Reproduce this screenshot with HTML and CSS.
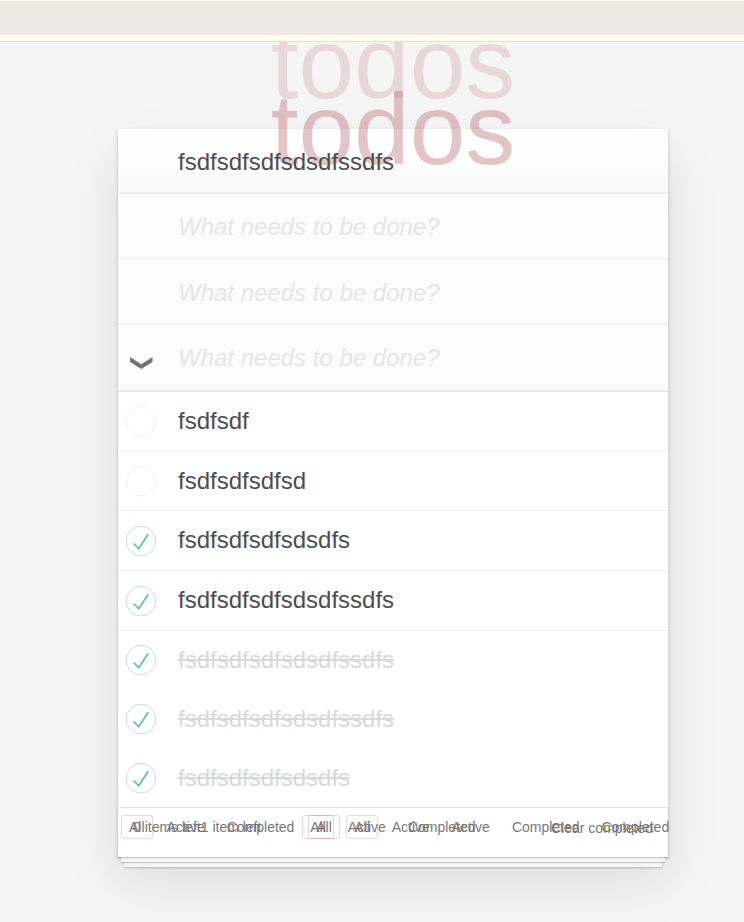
FILE: index.html
```
<!DOCTYPE html>
<html lang="en">
<head>
<meta charset="utf-8">
<title>todos</title>
<link rel="stylesheet" href="styles.css">
</head>
<body>
<svg class="defs" width="0" height="0">
  <symbol id="open" viewBox="-10 -18 100 135"><circle cx="50" cy="50" r="50" fill="none" stroke="#ededed" stroke-width="3"/></symbol>
  <symbol id="done" viewBox="-10 -18 100 135"><circle cx="50" cy="50" r="50" fill="none" stroke="#bddad5" stroke-width="3"/><path fill="#5dc2af" d="M72 25L42 71 27 56l-4 4 20 20 34-52z"/></symbol>
</svg>
<div class="banner"><div class="banner-fill"></div></div>
<main class="stage">
  <h1 class="title title-back">todos</h1>
  <section class="app">
    <div class="entry entry-first"><span class="entry-text">fsdfsdfsdfsdsdfssdfs</span></div>
    <h1 class="title title-front">todos</h1>
    <div class="sheet">
      <div class="entry placeholder"><span>What needs to be done?</span></div>
      <div class="entry placeholder"><span>What needs to be done?</span></div>
      <div class="entry placeholder">
        <svg class="chevron" viewBox="0 0 24 14"><path fill="#737373" d="M1.1 1 12.3 8.2 23.5 1V5.9L12.3 13.1 1.1 5.9z"/></svg>
        <span>What needs to be done?</span>
      </div>
      <ul class="list">
        <li><svg class="mark"><use href="#open"/></svg><span>fsdfsdf</span></li>
        <li><svg class="mark"><use href="#open"/></svg><span>fsdfsdfsdfsd</span></li>
        <li><svg class="mark"><use href="#done"/></svg><span>fsdfsdfsdfsdsdfs</span></li>
        <li><svg class="mark"><use href="#done"/></svg><span>fsdfsdfsdfsdsdfssdfs</span></li>
        <li class="completed"><svg class="mark"><use href="#done"/></svg><span>fsdfsdfsdfsdsdfssdfs</span></li>
        <li class="completed"><svg class="mark"><use href="#done"/></svg><span>fsdfsdfsdfsdsdfssdfs</span></li>
        <li class="completed"><svg class="mark"><use href="#done"/></svg><span>fsdfsdfsdfsdsdfs</span></li>
      </ul>
      <footer class="footer">
        <div class="layer counts"><span>0 items left</span><span>1 item left</span></div>
        <div class="layer filters f1"><a class="selected">All</a><a>Active</a><a>Completed</a></div>
        <div class="layer filters f2"><a class="selected">All</a><a>Active</a><a>Completed</a></div>
        <div class="layer filters f3"><a class="selected">All</a><a class="a3">Active</a><a class="c3">Completed</a></div>
        <div class="layer filters f4"><a class="selected">All</a><a class="a4">Active</a><a class="c4">Completed</a></div>
        <div class="layer clear">Clear completed</div>
      </footer>
    </div>
  </section>
</main>
</body>
</html>
```

FILE: styles.css
```
* { box-sizing: border-box; }
html, body { height: 100%; }
body {
  margin: 0;
  background: #f5f5f5;
  color: #4d4d4d;
  font-family: "Liberation Sans", Arial, sans-serif;
  overflow: hidden;
}
.defs { position: absolute; }
.banner {
  height: 42px;
  padding-top: 1px;
  background: #fffaeb;
  border-bottom: 1px solid #e4dfd0;
}
.banner-fill { height: 34px; background: #ede8e1; }
.stage {
  position: relative;
  height: 880px;
  padding-top: 87px;
  overflow: hidden;
}
.title {
  position: absolute;
  margin: 0;
  width: 550px;
  font-size: 100px;
  font-weight: 400;
  line-height: 112px;
  text-align: center;
}
.title-back { top: -35px; left: 118px; color: rgba(160, 48, 48, .145); }
.title-front { top: -56px; left: 0; color: rgba(160, 48, 48, .27); }
.app {
  position: relative;
  width: 550px;
  margin-left: 118px;
  background: #fff;
  box-shadow: 0 2px 4px rgba(0, 0, 0, .2), 0 25px 50px rgba(0, 0, 0, .1);
}
.entry {
  position: relative;
  display: flex;
  align-items: center;
  height: 65.45px;
  padding-left: 60px;
  background: #fcfcfc;
  box-shadow: inset 0 -2px 1px rgba(0, 0, 0, .03);
  font-size: 24px;
  line-height: 33.6px;
}
.entry-first {
  background: linear-gradient(#fdfdfd 30%, #f9f9f9);
  box-shadow: inset 0 -2px 1px rgba(0, 0, 0, .05);
}
.entry-text { position: relative; z-index: 2; }
.placeholder { color: #e6e6e6; font-style: italic; }
.chevron { position: absolute; left: 11px; top: 31px; width: 24px; height: 14px; }
.list {
  margin: 0;
  padding: 0;
  list-style: none;
  background: #fff;
  border-top: 1px solid #e6e6e6;
}
.list li {
  display: flex;
  align-items: center;
  height: 59.8px;
  border-bottom: 1px solid #ededed;
  font-size: 24px;
  line-height: 28.8px;
}
.list .completed { height: 58.8px; border-bottom: 0; color: #d9d9d9; text-decoration: line-through; }
.mark { width: 40px; height: 40px; margin-right: 20px; overflow: visible; }
.footer {
  position: relative;
  height: 50px;
  background: #fff;
  border-top: 1px solid #e6e6e6;
  color: #777;
  font-size: 14px;
  line-height: 16px;
  box-shadow: 0 1px 1px rgba(0, 0, 0, .2), 0 8px 0 -3px #f6f6f6,
    0 9px 1px -3px rgba(0, 0, 0, .2), 0 16px 0 -6px #f6f6f6,
    0 17px 2px -6px rgba(0, 0, 0, .2);
}
.layer { position: absolute; top: 11px; display: flex; white-space: nowrap; }
.counts { left: 15px; }
.filters { top: 7px; gap: 6px; }
.filters a { padding: 3px 7px; border: 1px solid transparent; border-radius: 3px; height: 24px; }
.filters .selected { border-color: rgba(175, 47, 47, .2); }
.f1 { left: 3px; }
.f2 { left: 184.2px; }
.f3 { left: 190.2px; }
.f4 { left: 228.2px; }
.f3 .a3 { margin-left: 38px; }
.f3 .c3 { margin-left: 60px; }
.f4 .a4 { margin-left: 60px; }
.f4 .c4 { margin-left: 89.6px; }
.clear { left: 433px; top: 12px; }
```
